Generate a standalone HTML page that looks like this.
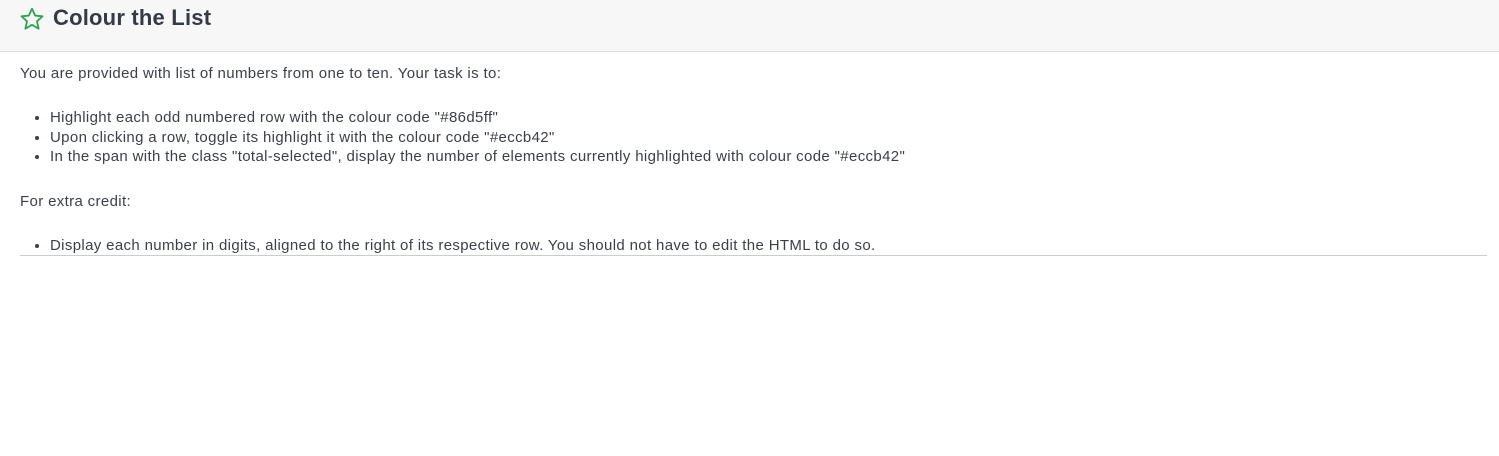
<!DOCTYPE html>
<html><head><style>
body{margin:0;background:#fff;font-family:"Liberation Sans",sans-serif;color:#3a3f4a;}
.hdr{height:51px;background:#f7f7f7;border-bottom:1px solid #ddd;position:relative;}
.hdr svg{position:absolute;left:19px;top:6px;}
.hdr h1{position:absolute;left:53px;top:5px;margin:0;font-size:22px;font-weight:bold;color:#343b48;letter-spacing:0.2px;}
.c{position:absolute;left:20px;top:64px;width:1467px;font-size:15px;letter-spacing:0.35px;line-height:20px;}
p{margin:0;}
ul{margin:24px 0 25px 0;padding-left:30px;}
li{line-height:19.5px;}
.rule{border-bottom:1px solid #ccc;}
</style></head><body>
<div class="hdr">
<svg width="26" height="26" viewBox="0 0 24 24"><path d="M12 2.5l2.9 6.3 6.8.7-5.1 4.6 1.5 6.8L12 17.4l-6.1 3.5 1.5-6.8L2.3 9.5l6.8-.7z" fill="none" stroke="#2ea44f" stroke-width="1.7" stroke-linejoin="round"/></svg>
<h1>Colour the List</h1>
</div>
<div class="c">
<p>You are provided with list of numbers from one to ten. Your task is to:</p>
<ul>
<li>Highlight each odd numbered row with the colour code "#86d5ff"</li>
<li>Upon clicking a row, toggle its highlight it with the colour code "#eccb42"</li>
<li>In the span with the class "total-selected", display the number of elements currently highlighted with colour code "#eccb42"</li>
</ul>
<p>For extra credit:</p>
<div class="rule"><ul style="margin-bottom:0;margin-top:25px;padding-bottom:0"><li style="line-height:18.5px">Display each number in digits, aligned to the right of its respective row. You should not have to edit the HTML to do so.</li></ul></div>
</div>
</body></html>
